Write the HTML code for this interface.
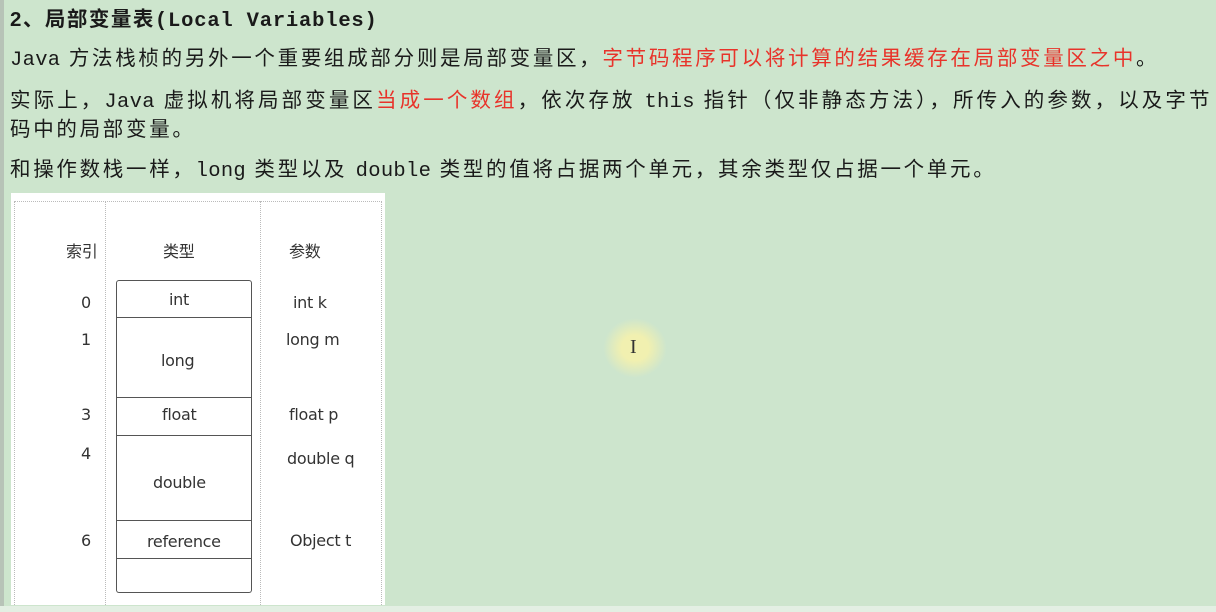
<!DOCTYPE html><html><head><meta charset="utf-8"><style>
body{margin:0;width:1216px;height:612px;background:#cde5cd;position:relative;overflow:hidden;font-family:"Liberation Sans","Noto Sans CJK SC",sans-serif;color:#1a1a1a}
.l{position:absolute;left:10px;font-size:20.5px;letter-spacing:2.7px;white-space:nowrap;line-height:24px}
.m{font-family:"Liberation Mono","Noto Sans CJK SC",monospace;font-size:20.5px;letter-spacing:0.3px}
.r{color:#e8332a}
.img{position:absolute;left:11px;top:193px;width:374px;height:412px;background:#fff}
.t{position:absolute;font-size:16px;color:#333;font-family:"DejaVu Sans","Noto Sans CJK SC",sans-serif;letter-spacing:-0.3px}
.c{position:absolute;left:116px;width:136px;border:1.5px solid #555;border-top:none;box-sizing:border-box}
</style></head><body>
<div style="position:absolute;left:0;top:0;width:4px;height:612px;background:#b7c3b7"></div>
<div style="position:absolute;left:0;top:606px;width:1216px;height:6px;background:#e3efe3"></div>
<div class="l" style="top:8px;font-weight:bold;letter-spacing:1.5px">2、局部变量表<span class="m" style="letter-spacing:0.8px">(Local Variables)</span></div>
<div class="l" style="top:47px"><span class="m">Java</span> 方法栈桢的另外一个重要组成部分则是局部变量区，<span class="r">字节码程序可以将计算的结果缓存在局部变量区之中</span>。</div>
<div class="l" style="top:89px;letter-spacing:3.1px">实际上，<span class="m">Java</span> 虚拟机将局部变量区<span class="r">当成一个数组</span>，依次存放 <span class="m">this</span> 指针（仅非静态方法），所传入的参数，以及字节</div>
<div class="l" style="top:118px">码中的局部变量。</div>
<div class="l" style="top:158px">和操作数栈一样，<span class="m">long</span> 类型以及 <span class="m">double</span> 类型的值将占据两个单元，其余类型仅占据一个单元。</div>
<div class="img">
<div style="position:absolute;left:3px;top:8px;right:3px;bottom:0;border:1px dotted #bbb;border-bottom:none"></div>
<div style="position:absolute;left:94px;top:8px;bottom:0;border-left:1px dotted #bbb"></div>
<div style="position:absolute;left:249px;top:8px;bottom:0;border-left:1px dotted #bbb"></div>
</div>
<div class="t" style="left:66px;top:238px">索引</div>
<div class="t" style="left:163px;top:238px">类型</div>
<div class="t" style="left:289px;top:238px">参数</div>
<div class="c" style="top:280px;height:38px;border-top:1.5px solid #555;border-radius:3px 3px 0 0"></div>
<div class="c" style="top:318px;height:80px"></div>
<div class="c" style="top:398px;height:38px"></div>
<div class="c" style="top:436px;height:85px"></div>
<div class="c" style="top:521px;height:38px"></div>
<div class="c" style="top:559px;height:34px;border-radius:0 0 3px 3px"></div>
<div class="t" style="left:81px;top:293px">0</div><div class="t" style="left:169px;top:290px">int</div><div class="t" style="left:293px;top:293px">int k</div>
<div class="t" style="left:81px;top:330px">1</div><div class="t" style="left:161px;top:351px">long</div><div class="t" style="left:286px;top:330px">long m</div>
<div class="t" style="left:81px;top:405px">3</div><div class="t" style="left:162px;top:405px">float</div><div class="t" style="left:289px;top:405px">float p</div>
<div class="t" style="left:81px;top:444px">4</div><div class="t" style="left:153px;top:473px">double</div><div class="t" style="left:287px;top:449px">double q</div>
<div class="t" style="left:81px;top:531px">6</div><div class="t" style="left:147px;top:532px">reference</div><div class="t" style="left:290px;top:531px">Object t</div>
<div style="position:absolute;left:603px;top:318px;width:64px;height:60px;border-radius:50%;background:radial-gradient(#f1f0b0 30%,rgba(241,240,176,0) 70%)"></div>
<div style="position:absolute;left:630px;top:336px;font-size:20px;color:#333;font-family:'Liberation Serif',serif">I</div>
</body></html>
